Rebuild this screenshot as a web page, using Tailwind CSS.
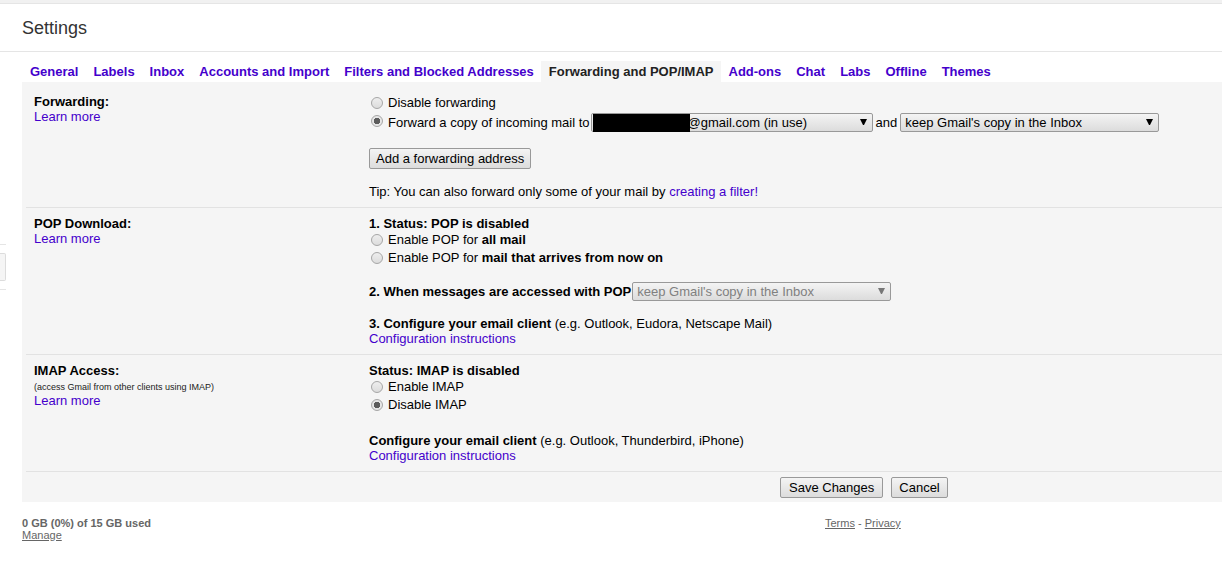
<!DOCTYPE html>
<html lang="en">
<head>
<meta charset="utf-8">
<title>Settings</title>
<script src="https://cdn.jsdelivr.net/npm/@tailwindcss/browser@4"></script>
</head>
<body class="min-h-screen bg-white font-['Liberation_Sans',Arial,sans-serif] text-[13px] leading-[15px] text-black">
<header>
  <div class="h-1 border-b border-[#e5e5e5] bg-[#f1f1f1]"></div>
  <div class="flex h-12 items-center border-b border-[#e5e5e5] pl-[22px]">
    <h1 class="text-[18px] leading-6 text-[#333]">Settings</h1>
  </div>
</header>
<div class="flex">
  <aside class="w-[22px] shrink-0 pt-48">
    <div class="flex h-[46px] w-1.5 items-center border-y border-[#e5e5e5]">
      <button type="button" aria-label="Side panel" class="h-7 w-1.5 rounded-r-xs border border-l-0 border-[#dcdcdc] bg-[#f5f5f5]"></button>
    </div>
  </aside>
  <div class="min-w-0 flex-1">
    <nav class="flex pt-[9px] font-bold leading-[21px] whitespace-nowrap text-[#4400cc]">
      <a href="#" class="pr-[7px] pl-2">General</a>
      <a href="#" class="pr-[7px] pl-2">Labels</a>
      <a href="#" class="pr-[7px] pl-2">Inbox</a>
      <a href="#" class="pr-[7px] pl-2">Accounts and Import</a>
      <a href="#" class="pr-[7px] pl-2">Filters and Blocked Addresses</a>
      <a href="#" aria-current="page" class="bg-[#f5f5f5] pr-[7px] pl-2 text-[#222]">Forwarding and POP/IMAP</a>
      <a href="#" class="pr-[7px] pl-2">Add-ons</a>
      <a href="#" class="pr-[7px] pl-2">Chat</a>
      <a href="#" class="pr-[7px] pl-2">Labs</a>
      <a href="#" class="pr-[7px] pl-2">Offline</a>
      <a href="#" class="pr-[7px] pl-2">Themes</a>
    </nav>
    <form class="bg-[#f5f5f5] pl-1 whitespace-nowrap">
      <section class="flex border-b border-[#e2e2e2] pt-3 pb-2 pl-2">
        <div class="w-[335px] shrink-0">
          <h2 class="font-bold">Forwarding:</h2>
          <a href="#" class="text-[#4400cc]">Learn more</a>
        </div>
        <div>
          <div class="flex h-[19px] items-start">
            <input type="radio" name="fwd" id="fwd-off" class="mx-0.5 mt-[3px] mr-[5px] size-3 appearance-none rounded-full border border-[#a6a6a6] bg-linear-to-b from-[#eee] to-[#dcdcdc]">
            <label for="fwd-off" class="leading-[18px]">Disable forwarding</label>
          </div>
          <div class="flex h-[19px] items-start">
            <input type="radio" name="fwd" id="fwd-on" checked class="mx-0.5 mt-0.5 mr-[5px] size-3 appearance-none rounded-full border border-[#a6a6a6] bg-[radial-gradient(circle,#5c5c5c_3px,#e6e6e6_3px)]">
            <label for="fwd-on" class="mr-px leading-[19px]">Forward a copy of incoming mail to</label>
            <div class="relative">
              <select aria-label="Forwarding address" class="block h-[19px] w-[282px] appearance-none rounded-xs border border-[#999] bg-linear-to-b from-[#f4f4f4] to-[#dcdcdc] pl-24 leading-[17px]"><option>@gmail.com (in use)</option></select>
              <span class="absolute top-px left-0.5 h-[18px] w-[97px] bg-black"></span>
              <svg class="pointer-events-none absolute top-1.5 right-1.5 h-1.5 w-[7px]" viewBox="0 0 7 6"><path d="M0 0h7L4 6H3z"/></svg>
            </div>
            <span class="mx-[3px] leading-[19px]">and</span>
            <div class="relative">
              <select aria-label="After forwarding" class="block h-[19px] w-[259px] appearance-none rounded-xs border border-[#999] bg-linear-to-b from-[#f4f4f4] to-[#dcdcdc] pl-1 leading-[17px]"><option>keep Gmail's copy in the Inbox</option></select>
              <svg class="pointer-events-none absolute top-1.5 right-1.5 h-1.5 w-[7px]" viewBox="0 0 7 6"><path d="M0 0h7L4 6H3z"/></svg>
            </div>
          </div>
          <button type="button" class="mt-4 block h-[21px] rounded-xs border border-[#999] bg-linear-to-b from-[#f4f4f4] to-[#dcdcdc] px-1.5 leading-[19px]">Add a forwarding address</button>
          <p class="mt-[15px]">Tip: You can also forward only some of your mail by <a href="#" class="text-[#4400cc]">creating a filter!</a></p>
        </div>
      </section>
      <section class="flex border-b border-[#e2e2e2] py-2 pl-2">
        <div class="w-[335px] shrink-0">
          <h2 class="font-bold">POP Download:</h2>
          <a href="#" class="text-[#4400cc]">Learn more</a>
        </div>
        <div>
          <p class="font-bold">1. Status: POP is disabled</p>
          <div class="flex h-[18px] items-start">
            <input type="radio" name="pop" id="pop-all" class="mx-0.5 mt-[3px] mr-[5px] size-3 appearance-none rounded-full border border-[#a6a6a6] bg-linear-to-b from-[#eee] to-[#dcdcdc]">
            <label for="pop-all" class="leading-[18px]">Enable POP for <b>all mail</b></label>
          </div>
          <div class="flex h-[18px] items-start">
            <input type="radio" name="pop" id="pop-new" class="mx-0.5 mt-[3px] mr-[5px] size-3 appearance-none rounded-full border border-[#a6a6a6] bg-linear-to-b from-[#eee] to-[#dcdcdc]">
            <label for="pop-new" class="leading-[18px]">Enable POP for <b>mail that arrives from now on</b></label>
          </div>
          <div class="mt-[15px] flex">
            <label for="pop-action" class="mr-px font-bold leading-[19px]">2. When messages are accessed with POP</label>
            <div class="relative">
              <select id="pop-action" disabled class="block h-[19px] w-[259px] appearance-none rounded-xs border border-[#999] bg-linear-to-b from-[#f4f4f4] to-[#dcdcdc] pl-1 leading-[17px] text-[#808080] opacity-100"><option>keep Gmail's copy in the Inbox</option></select>
              <svg class="pointer-events-none absolute top-1.5 right-1.5 h-1.5 w-[7px] fill-[#777]" viewBox="0 0 7 6"><path d="M0 0h7L4 6H3z"/></svg>
            </div>
          </div>
          <p class="mt-[15px]"><b>3. Configure your email client</b> (e.g. Outlook, Eudora, Netscape Mail)</p>
          <a href="#" class="block text-[#4400cc]">Configuration instructions</a>
        </div>
      </section>
      <section class="flex border-b border-[#e2e2e2] py-2 pl-2">
        <div class="w-[335px] shrink-0">
          <h2 class="font-bold">IMAP Access:</h2>
          <p class="pt-[3px] text-[9px] leading-3 text-[#222]">(access Gmail from other clients using IMAP)</p>
          <a href="#" class="block text-[#4400cc]">Learn more</a>
        </div>
        <div>
          <p class="font-bold">Status: IMAP is disabled</p>
          <div class="flex h-[18px] items-start">
            <input type="radio" name="imap" id="imap-on" class="mx-0.5 mt-[3px] mr-[5px] size-3 appearance-none rounded-full border border-[#a6a6a6] bg-linear-to-b from-[#eee] to-[#dcdcdc]">
            <label for="imap-on" class="leading-[18px]">Enable IMAP</label>
          </div>
          <div class="flex h-[18px] items-start">
            <input type="radio" name="imap" id="imap-off" checked class="mx-0.5 mt-[3px] mr-[5px] size-3 appearance-none rounded-full border border-[#a6a6a6] bg-[radial-gradient(circle,#5c5c5c_3px,#e6e6e6_3px)]">
            <label for="imap-off" class="leading-[18px]">Disable IMAP</label>
          </div>
          <p class="mt-[19px]"><b>Configure your email client</b> (e.g. Outlook, Thunderbird, iPhone)</p>
          <a href="#" class="block text-[#4400cc]">Configuration instructions</a>
        </div>
      </section>
      <div class="grid grid-cols-[754fr_442fr] pt-[5px] pb-1">
        <div class="col-start-2 flex gap-2">
          <button type="submit" class="h-[21px] rounded-xs border border-[#999] bg-linear-to-b from-[#f4f4f4] to-[#dcdcdc] px-2 leading-[19px]">Save Changes</button>
          <button type="button" class="h-[21px] rounded-xs border border-[#999] bg-linear-to-b from-[#f4f4f4] to-[#dcdcdc] px-[7px] leading-[19px]">Cancel</button>
        </div>
      </div>
    </form>
    <footer class="grid grid-cols-[803fr_397fr] pt-[15px] text-[11px] leading-3 text-[#666]">
      <div>
        <p class="font-bold">0 GB (0%) of 15 GB used</p>
        <a href="#" class="block underline">Manage</a>
      </div>
      <p><a href="#" class="underline">Terms</a> - <a href="#" class="underline">Privacy</a></p>
    </footer>
  </div>
</div>
</body>
</html>
